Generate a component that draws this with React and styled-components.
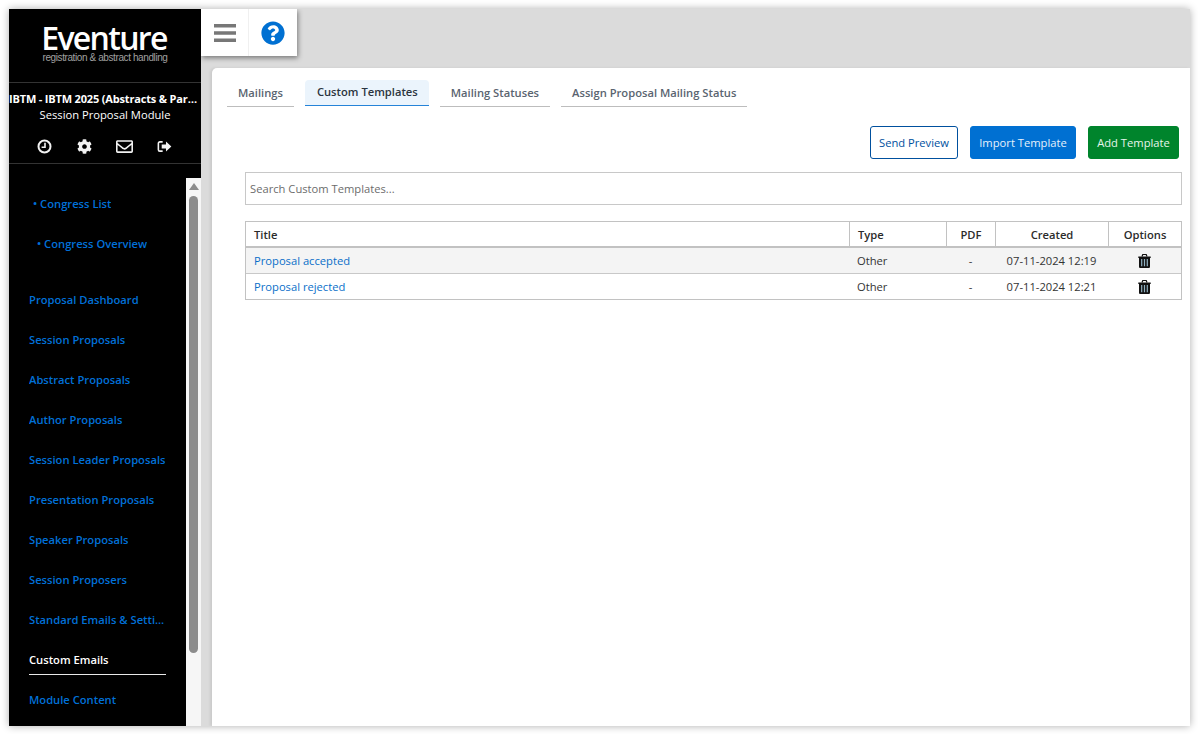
import React from 'react';
import styled, { createGlobalStyle } from 'styled-components';
import { FaCog, FaRegEnvelope, FaQuestionCircle } from 'react-icons/fa';

const Global = createGlobalStyle`
  html, body { margin: 0; padding: 0; background: #fff; overflow: hidden; }
  body { font-family: "Open Sans", "Liberation Sans", sans-serif; font-size: 11.2px; }
  * { box-sizing: border-box; }
`;

const Frame = styled.div`
  width: 1198px;
  height: 734px;
  padding: 9px 8px 8px 9px;
`;
const Win = styled.div`
  width: 1181px;
  height: 717px;
  display: flex;
  background: #dbdbdb;
  box-shadow: 0 0 8px rgba(0, 0, 0, 0.32);
  overflow: hidden;
`;
const Sidebar = styled.aside`
  width: 192px;
  flex: none;
  background: #000;
  display: flex;
  flex-direction: column;
`;
const Brand = styled.div`
  height: 74px;
  border-bottom: 1px solid #333;
  display: flex;
  flex-direction: column;
  align-items: center;
  padding-top: 14px;
`;
const Logo = styled.div`
  color: #fff;
  font-family: "Open Sans", sans-serif;
  font-weight: 600;
  font-size: 32px;
  line-height: 30px;
  letter-spacing: -1.7px;
  margin-right: 2px;
`;
const Tagline = styled.div`
  color: #a0a0a0;
  font-family: "Liberation Sans", sans-serif;
  font-size: 10px;
  line-height: 10px;
  letter-spacing: -0.4px;
`;
const Context = styled.div`
  height: 81px;
  border-bottom: 1px solid #333;
  color: #fff;
  text-align: center;
  padding-top: 8px;
`;
const Congress = styled.div`
  font-weight: 700;
  font-size: 11px;
  letter-spacing: -0.17px;
  line-height: 16px;
  white-space: nowrap;
  overflow: hidden;
  text-overflow: ellipsis;
`;
const ModuleName = styled.div`
  line-height: 16px;
`;
const Tools = styled.div`
  margin-top: 15px;
  display: flex;
  padding-left: 27px;
  gap: 23px;
  align-items: center;
  height: 16px;
  color: #f2f2f2;
`;
const Tool = styled.span`
  width: 17px;
  height: 16px;
  display: flex;
  align-items: center;
  justify-content: center;
`;
const NavArea = styled.div`
  flex: 1;
  display: flex;
  min-height: 0;
  padding-top: 14px;
`;
const NavList = styled.nav`
  width: 177px;
  height: 100%;
  overflow: hidden;
  padding-top: 6px;
`;
const NavGroup = styled.div`
  margin-bottom: 16px;
`;
const NavItem = styled.div`
  height: 40px;
  padding-left: ${p => p.$indent}px;
  display: flex;
  align-items: center;
  color: ${p => (p.$active ? '#fff' : '#0070d8')};
  font-weight: 600;
  white-space: nowrap;
`;
const NavLabel = styled.span`
  position: relative;
  display: block;
  line-height: 16px;
  width: ${p => (p.$active ? '137px' : 'auto')};
  max-width: 137px;
  overflow: ${p => (p.$active ? 'visible' : 'hidden')};
  text-overflow: ellipsis;
  ${p => p.$active && `
    &::after {
      content: '';
      position: absolute;
      left: 0;
      right: 0;
      bottom: -7px;
      height: 1px;
      background: #e8e8e8;
    }
  `}
`;
const Scrollbar = styled.div`
  width: 15px;
  flex: none;
  background: #f6f6f6;
  display: flex;
  flex-direction: column;
  align-items: center;
  padding-top: 5px;
`;
const ScrollThumb = styled.div`
  margin-top: 6px;
  width: 9px;
  height: 457px;
  border-radius: 5px;
  background: #8c8c8c;
`;
const ScrollArrow = styled.div`
  width: 0;
  height: 0;
  border-left: 5px solid transparent;
  border-right: 5px solid transparent;
  border-bottom: 7px solid #8c8c8c;
`;
const Main = styled.main`
  flex: 1;
  display: flex;
  flex-direction: column;
  min-width: 0;
`;
const TopBar = styled.div`
  height: 59px;
  flex: none;
`;
const TopTools = styled.div`
  width: 96px;
  height: 47px;
  display: flex;
  background: #fff;
  box-shadow: 1px 2px 5px rgba(0, 0, 0, 0.45);
`;
const TopBtn = styled.button`
  border: 0;
  background: #fff;
  padding: 0;
  width: ${p => p.$w}px;
  display: flex;
  align-items: center;
  justify-content: center;
  & + & { border-left: 1px solid #f0f0f0; }
`;
const Card = styled.section`
  flex: 1;
  margin-left: 11px;
  background: #fff;
  border-top-left-radius: 5px;
  padding: 12px 8px 0 15px;
  box-shadow: -2px 0 3px rgba(0,0,0,0.08);
`;
const Tabs = styled.div`
  display: flex;
  gap: 11px;
  height: 27px;
`;
const Tab = styled.div`
  height: ${p => (p.$active ? '26px' : '27px')};
  padding: ${p => (p.$active ? '4px' : '5px')} 11px 0 ${p => (p.$active ? '12px' : '11px')};
  line-height: 16px;
  font-weight: 600;
  color: ${p => (p.$active ? '#2b3440' : '#5a6470')};
  background: ${p => (p.$active ? '#ebf4fc' : 'transparent')};
  border-bottom: 1px solid ${p => (p.$active ? '#2583d8' : '#bdbdbd')};
  border-radius: ${p => (p.$active ? '4px 4px 0 0' : '0')};
  white-space: nowrap;
`;
const Actions = styled.div`
  display: flex;
  justify-content: flex-end;
  gap: 12px;
  margin-top: 19px;
  padding-right: 3px;
`;
const Action = styled.button`
  height: 33px;
  width: ${p => p.$w}px;
  border-radius: 3px;
  padding: 0;
  font-family: inherit;
  font-size: 11.2px;
  border: 1px solid ${p => p.$border};
  background: ${p => p.$bg};
  color: ${p => p.$fg};
`;
const Search = styled.div`
  margin-left: 18px;
  margin-top: 13px;
  height: 33px;
  border: 1px solid #c8c8c8;
  padding-left: 4px;
  display: flex;
  align-items: center;
  color: #6c6c6c;
`;
const Table = styled.div`
  margin-left: 18px;
  margin-top: 16px;
  border: 1px solid #c2c2c2;
`;
const Row = styled.div`
  display: grid;
  grid-template-columns: 603px 97px 49px 113px 1fr;
  height: 26px;
  background: ${p => (p.$shade ? '#f4f4f4' : '#fff')};
  border-top: ${p => (p.$first ? '0' : '1px solid #c8c8c8')};
`;
const HeadRow = styled(Row)`
  height: 26px;
  border-bottom: 2px solid #c2c2c2;
`;
const BodyRow = styled(Row)`
  height: ${p => (p.$first ? '25px' : '26px')};
`;
const Cell = styled.div`
  display: flex;
  align-items: center;
  justify-content: ${p => (p.$center ? 'center' : 'flex-start')};
  padding-left: ${p => (p.$center ? '0' : '8px')};
  color: ${p => (p.$link ? '#0a6fc9' : '#333')};
  ${p => p.$head && `
    font-weight: 600;
    color: #2b2b2b;
  `}
  ${p => p.$line && 'border-left: 1px solid #c2c2c2;'}
`;

const Clock = () => (
  <svg width="15" height="15" viewBox="0 0 15 15">
    <circle cx="7.5" cy="7.5" r="6" fill="none" stroke="#f2f2f2" strokeWidth="2" />
    <path d="M8 3.8v4.4H4.6" fill="none" stroke="#f2f2f2" strokeWidth="1.6" />
  </svg>
);
const SignOut = () => (
  <svg width="15" height="13" viewBox="0 0 16 14">
    <path d="M6 2H3a1.6 1.6 0 0 0-1.6 1.6v6.8A1.6 1.6 0 0 0 3 12h3" fill="none" stroke="#f2f2f2" strokeWidth="1.7" />
    <path d="M5 4.8h4.6V1.6L15.4 7l-5.8 5.4V9.2H5z" fill="#f2f2f2" />
  </svg>
);
const Menu = () => (
  <svg width="22" height="18" viewBox="0 0 22 18">
    <path d="M0 0h22v3.6H0zM0 7.2h22v3.6H0zM0 14.4h22V18H0z" fill="#777" />
  </svg>
);
const Trash = () => (
  <svg width="13" height="14" viewBox="0 0 13 14">
    <path d="M0.3 2.4h12.4v1.5H12V12.4c0 .9-.6 1.6-1.4 1.6H2.4C1.6 14 1 13.3 1 12.4V3.9H.3z" fill="#111" />
    <path d="M4 2.4l.8-1.9h3.4L9 2.4" fill="none" stroke="#111" strokeWidth="1.2" />
    <path d="M3.1 5h1.2v7.2H3.1zM5.9 5h1.2v7.2H5.9zM8.7 5h1.2v7.2H8.7z" fill="#8fb0bf" />
  </svg>
);

const items = [
  'Proposal Dashboard', 'Session Proposals', 'Abstract Proposals', 'Author Proposals',
  'Session Leader Proposals', 'Presentation Proposals', 'Speaker Proposals', 'Session Proposers',
  'Standard Emails & Settings', 'Custom Emails', 'Module Content',
];
const rows = [
  { title: 'Proposal accepted', created: '07-11-2024 12:19', shade: true },
  { title: 'Proposal rejected', created: '07-11-2024 12:21', shade: false },
];

export default function App() {
  return (
    <Frame>
      <Global />
      <Win>
        <Sidebar>
          <Brand>
            <Logo>Eventure</Logo>
            <Tagline>registration &amp; abstract handling</Tagline>
          </Brand>
          <Context>
            <Congress>IBTM - IBTM 2025 (Abstracts &amp; Participants)</Congress>
            <ModuleName>Session Proposal Module</ModuleName>
            <Tools>
              <Tool><Clock /></Tool>
              <Tool><FaCog size={15} /></Tool>
              <Tool><FaRegEnvelope size={17} /></Tool>
              <Tool><SignOut /></Tool>
            </Tools>
          </Context>
          <NavArea>
            <NavList>
              <NavGroup>
                <NavItem $indent={24}><NavLabel>• Congress List</NavLabel></NavItem>
                <NavItem $indent={28}><NavLabel>• Congress Overview</NavLabel></NavItem>
              </NavGroup>
              {items.map(t => (
                <NavItem key={t} $indent={20} $active={t === 'Custom Emails'}>
                  <NavLabel $active={t === 'Custom Emails'}>{t}</NavLabel>
                </NavItem>
              ))}
            </NavList>
            <Scrollbar>
              <ScrollArrow />
              <ScrollThumb />
            </Scrollbar>
          </NavArea>
        </Sidebar>
        <Main>
          <TopBar>
            <TopTools>
              <TopBtn $w={47}><Menu /></TopBtn>
              <TopBtn $w={49}><FaQuestionCircle size={24} color="#0070d2" /></TopBtn>
            </TopTools>
          </TopBar>
          <Card>
            <Tabs>
              <Tab>Mailings</Tab>
              <Tab $active>Custom Templates</Tab>
              <Tab>Mailing Statuses</Tab>
              <Tab>Assign Proposal Mailing Status</Tab>
            </Tabs>
            <Actions>
              <Action $w={88} $border="#00509e" $bg="#fff" $fg="#00509e">Send Preview</Action>
              <Action $w={106} $border="#0070d2" $bg="#0070d2" $fg="#e6f1fb">Import Template</Action>
              <Action $w={91} $border="#00842c" $bg="#00842c" $fg="#e6f5ea">Add Template</Action>
            </Actions>
            <Search>Search Custom Templates...</Search>
            <Table>
              <HeadRow $first>
                <Cell $head>Title</Cell>
                <Cell $head $line>Type</Cell>
                <Cell $head $line $center>PDF</Cell>
                <Cell $head $line $center>Created</Cell>
                <Cell $head $line $center>Options</Cell>
              </HeadRow>
              {rows.map((r, i) => (
                <BodyRow key={r.title} $shade={r.shade} $first={i === 0}>
                  <Cell $link>{r.title}</Cell>
                  <Cell>Other</Cell>
                  <Cell $center>-</Cell>
                  <Cell $center>{r.created}</Cell>
                  <Cell $center><Trash /></Cell>
                </BodyRow>
              ))}
            </Table>
          </Card>
        </Main>
      </Win>
    </Frame>
  );
}
